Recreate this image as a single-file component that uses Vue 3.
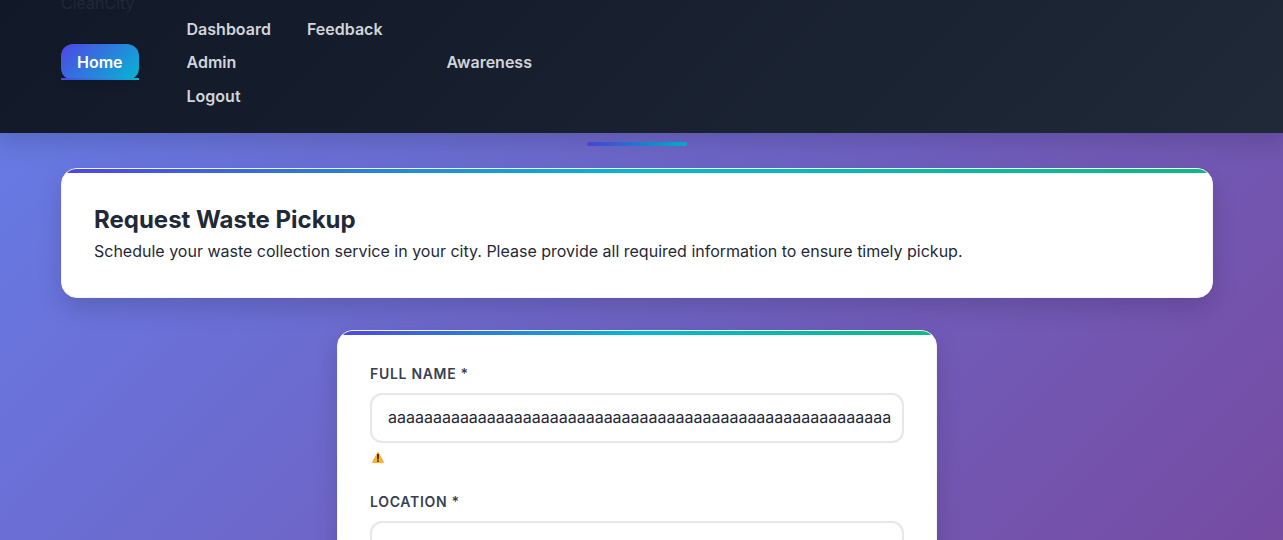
<script setup>
import { ref } from 'vue'

const fullName = ref('a'.repeat(56))
const location = ref('')
</script>

<template>
  <div class="page">
    <header class="header">
      <div class="container">
        <div class="brand">CleanCity</div>
        <nav>
          <ul class="nav">
            <li><a class="link active" href="#home">Home</a></li>
            <li class="group">
              <div class="row">
                <a class="link" href="#dashboard">Dashboard</a>
                <a class="link" href="#feedback">Feedback</a>
              </div>
              <div class="row"><a class="link" href="#admin">Admin</a></div>
              <div class="row"><a class="link" href="#logout">Logout</a></div>
            </li>
            <li><a class="link" href="#awareness">Awareness</a></li>
          </ul>
        </nav>
      </div>
    </header>

    <main class="container main">
      <div class="accent"></div>
      <section class="card intro">
        <h2>Request Waste Pickup</h2>
        <p>Schedule your waste collection service in your city. Please provide all required information to ensure timely pickup.</p>
      </section>
      <form class="card form" @submit.prevent>
        <div class="field">
          <label for="full-name">Full Name *</label>
          <input id="full-name" v-model="fullName" type="text" />
          <div class="error">
            <svg width="12" height="11" viewBox="0 0 24 22" role="img" aria-label="Warning">
              <path d="M10.5 1.2Q12-1 13.5 1.2L23.6 19.6Q24.2 22 22 22H2Q-.2 22 .4 19.6Z" fill="#ffb02e" />
              <path d="M10.2 5.4Q10.2 3.4 12 3.4Q13.8 3.4 13.8 5.4L13.4 14.6Q12.9 15.6 12 15.6Q11.1 15.6 10.6 14.6Z" fill="#1c1c1c" />
              <circle cx="12" cy="18.2" r="1.8" fill="#1c1c1c" />
            </svg>
          </div>
        </div>
        <div class="field">
          <label for="location">Location *</label>
          <input id="location" v-model="location" type="text" />
        </div>
      </form>
    </main>
  </div>
</template>

<style>
body {
  background: linear-gradient(135deg, #667eea 0%, #764ba2 100%) fixed;
}
</style>

<style scoped>
* {
  box-sizing: border-box;
}
.page {
  height: 100vh;
  overflow: hidden;
  color: #1f2937;
  font-family: Inter, "Liberation Sans", sans-serif;
  font-size: 16px;
}
.container {
  max-width: 1200px;
  margin: 0 auto;
  padding: 0 24px;
}
.header {
  position: relative;
  z-index: 1;
  margin-top: -5px;
  padding: 0 9px 20px 0;
  background: linear-gradient(135deg, #111827 0%, #1f2937 100%);
  box-shadow: 0 4px 24px 6px rgba(0, 0, 0, 0.15);
}
.brand {
  line-height: 17px;
}
.nav {
  display: flex;
  align-items: center;
  gap: 32px;
  margin: 0;
  padding: 0;
  list-style: none;
}
.row {
  display: flex;
  gap: 4px;
  height: 2.1em;
  align-items: center;
}
.link {
  position: relative;
  display: block;
  padding: 8px 16px;
  border-radius: 12px;
  color: #d1d5db;
  font-weight: 600;
  line-height: 20px;
  text-decoration: none;
}
.active {
  color: #fff;
  background: linear-gradient(135deg, #4f46e5, #06b6d4);
  box-shadow: 0 4px 6px rgba(0, 0, 0, 0.1);
}
.active::after {
  content: "";
  position: absolute;
  left: 0;
  right: 0;
  bottom: 0;
  height: 2px;
  background: linear-gradient(90deg, #4f46e5, #06b6d4);
}
.main {
  max-width: 1209px;
  padding-top: 9px;
  padding-right: 33px;
}
.accent {
  width: 100px;
  height: 4px;
  margin: 0 auto 22px;
  border-radius: 2px;
  background: linear-gradient(90deg, #4f46e5, #06b6d4);
}
.card {
  position: relative;
  overflow: hidden;
  padding: 32px;
  border: 1px solid #f3f4f6;
  border-radius: 16px;
  background: #fff;
  box-shadow: 0 10px 25px rgba(0, 0, 0, 0.15);
}
.card::before {
  content: "";
  position: absolute;
  top: 0;
  left: 0;
  right: 0;
  height: 4px;
  background: linear-gradient(90deg, #4f46e5, #06b6d4, #10b981);
}
.intro {
  margin-bottom: 32px;
}
h2 {
  margin: 0;
  font-size: 24px;
  font-weight: 700;
  line-height: 38px;
}
p {
  margin: 0 0 2px;
  line-height: 24px;
}
.form {
  max-width: 600px;
  margin: 0 auto;
}
.field {
  margin-bottom: 24px;
}
label {
  display: block;
  margin-bottom: 8px;
  color: #374151;
  font-size: 14px;
  font-weight: 600;
  line-height: 22px;
  letter-spacing: 0.05em;
  text-transform: uppercase;
}
input {
  display: block;
  width: 100%;
  height: 50px;
  padding: 0 10px 2px 16px;
  border: 2px solid #e5e7eb;
  border-radius: 12px;
  outline: none;
  background: #fff;
  color: #1f2937;
  font: inherit;
}
.error {
  display: flex;
  height: 24px;
  padding: 9px 2px 0;
}
</style>
